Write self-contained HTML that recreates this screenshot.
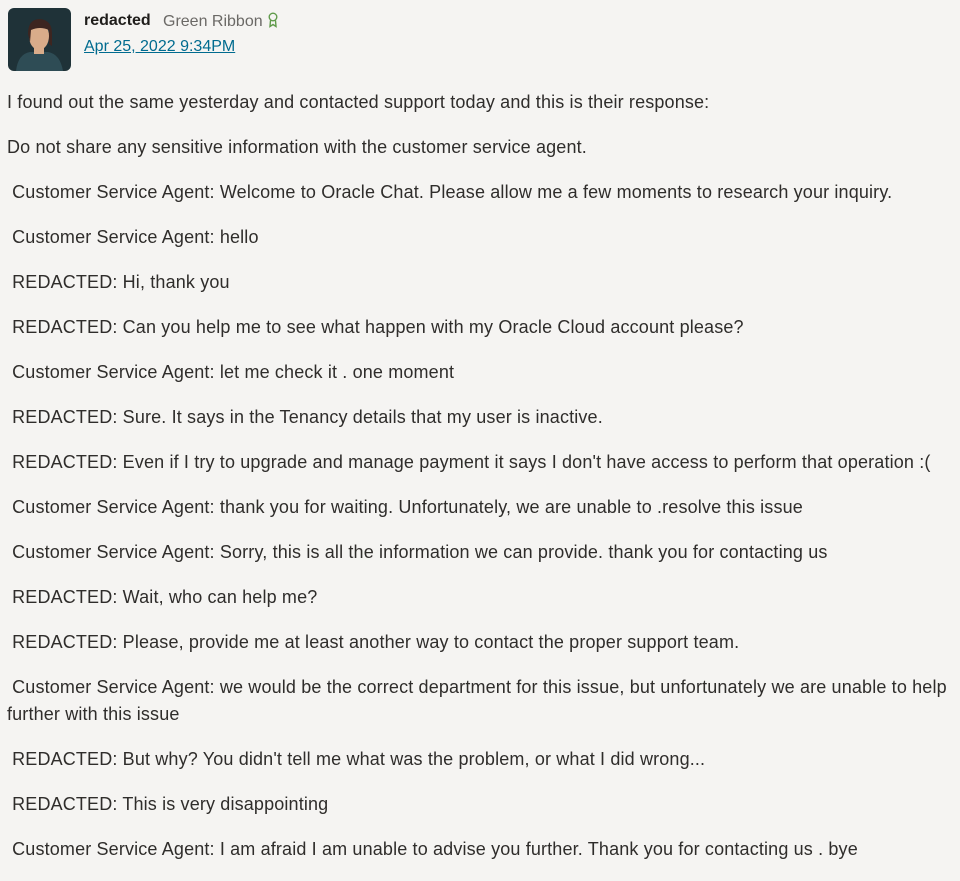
<!DOCTYPE html>
<html><head><meta charset="utf-8"><style>
body{margin:0;background:#f5f4f2;width:960px;height:879px;overflow:hidden;font-family:"Liberation Sans",sans-serif;color:#2f2d2b}
.av{position:absolute;left:8px;top:8px;width:63px;height:63px;border-radius:6px;background:#1f3238;overflow:hidden}
.name{position:absolute;left:84px;top:12px;font-size:16px;font-weight:bold;color:#1f1d1b}
.rib{position:absolute;left:163px;top:12px;font-size:16px;color:#6b6966}
.date{position:absolute;left:84px;top:38px;font-size:16px;color:#006b8f;text-decoration:underline}
.body{position:absolute;left:7px;top:89px;width:950px;font-size:18px;line-height:27px;letter-spacing:0.15px}
.body p{margin:0 0 18px 0}
</style></head><body>
<div class="av"><svg width="63" height="63" viewBox="0 0 63 63"><path d="M8 63 Q10 46 22 44 L40 44 Q52 46 55 63Z" fill="#2e4c55"/><rect x="26" y="36" width="10" height="10" fill="#d9ac8a"/><ellipse cx="31" cy="28" rx="10" ry="14" fill="#d9ac8a"/><path d="M20 26 Q20 11 32 11 Q44 12 44 26 L44 38 L41 36 L41 22 Q32 18 23 22 L22 34 Z" fill="#3d2520"/></svg></div>
<div class="name">redacted</div>
<div class="rib">Green Ribbon <svg width="12" height="16" viewBox="0 0 12 16" style="vertical-align:-2px"><circle cx="6" cy="5" r="3.8" fill="none" stroke="#5f9a4a" stroke-width="1.4"/><path d="M3.5 8.5 L3 14.5 L6 12.5 L9 14.5 L8.5 8.5" fill="none" stroke="#5f9a4a" stroke-width="1.4"/></svg></div>
<div class="date">Apr 25, 2022 9:34PM</div>
<div class="body">
<p>I found out the same yesterday and contacted support today and this is their response:</p>
<p>Do not share any sensitive information with the customer service agent.</p>
<p>&nbsp;Customer Service Agent: Welcome to Oracle Chat. Please allow me a few moments to research your inquiry.</p>
<p>&nbsp;Customer Service Agent: hello</p>
<p>&nbsp;REDACTED: Hi, thank you</p>
<p>&nbsp;REDACTED: Can you help me to see what happen with my Oracle Cloud account please?</p>
<p>&nbsp;Customer Service Agent: let me check it . one moment</p>
<p>&nbsp;REDACTED: Sure. It says in the Tenancy details that my user is inactive.</p>
<p>&nbsp;REDACTED: Even if I try to upgrade and manage payment it says I don't have access to perform that operation :(</p>
<p>&nbsp;Customer Service Agent: thank you for waiting. Unfortunately, we are unable to .resolve this issue</p>
<p>&nbsp;Customer Service Agent: Sorry, this is all the information we can provide. thank you for contacting us</p>
<p>&nbsp;REDACTED: Wait, who can help me?</p>
<p>&nbsp;REDACTED: Please, provide me at least another way to contact the proper support team.</p>
<p>&nbsp;Customer Service Agent: we would be the correct department for this issue, but unfortunately we are unable to help further with this issue</p>
<p>&nbsp;REDACTED: But why? You didn't tell me what was the problem, or what I did wrong...</p>
<p>&nbsp;REDACTED: This is very disappointing</p>
<p>&nbsp;Customer Service Agent: I am afraid I am unable to advise you further. Thank you for contacting us . bye</p>
</div>
</body></html>
